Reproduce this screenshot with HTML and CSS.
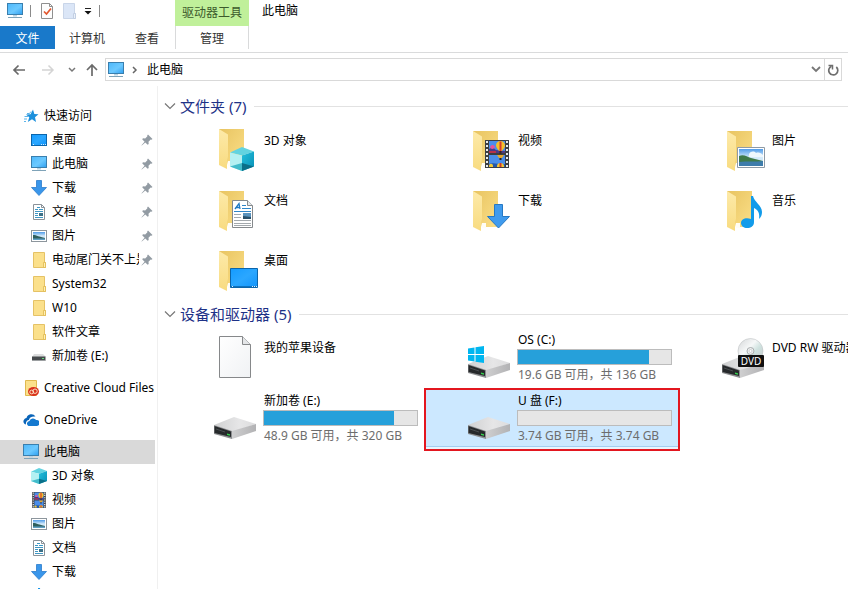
FILE: index.html
```html
<!DOCTYPE html>
<html lang="zh-CN">
<head>
<meta charset="utf-8">
<title>此电脑</title>
<link rel="stylesheet" href="styles.css">
</head>
<body>
<svg class="sprite" width="0" height="0" aria-hidden="true">
  <defs>
    <linearGradient id="g-screen" x1="0" y1="0" x2="1" y2="1"><stop offset="0" stop-color="#4db8fb"/><stop offset=".55" stop-color="#6cc9ff"/><stop offset="1" stop-color="#2f9ff0"/></linearGradient>
    <linearGradient id="g-desk" x1="0" y1="0" x2="1" y2="1"><stop offset="0" stop-color="#149bff"/><stop offset=".5" stop-color="#2ba7ff"/><stop offset="1" stop-color="#1194fb"/></linearGradient>
    <linearGradient id="g-back" x1="0" y1="0" x2="1" y2="1"><stop offset="0" stop-color="#e8c461"/><stop offset="1" stop-color="#fbdf88"/></linearGradient>
    <linearGradient id="g-flap" x1="0" y1="0" x2="0" y2="1"><stop offset="0" stop-color="#fdeaa9"/><stop offset="1" stop-color="#f8db80"/></linearGradient>
    <linearGradient id="g-top" x1="0" y1="0" x2="1" y2="0"><stop offset="0" stop-color="#cfd0d1"/><stop offset=".6" stop-color="#e6e6e7"/><stop offset="1" stop-color="#dcdcdd"/></linearGradient>
    <linearGradient id="g-side" x1="0" y1="0" x2="1" y2="0"><stop offset="0" stop-color="#cfcfd0"/><stop offset="1" stop-color="#b2b2b4"/></linearGradient>
    <linearGradient id="g-paper" x1="0" y1="0" x2="1" y2="1"><stop offset="0" stop-color="#ffffff"/><stop offset="1" stop-color="#f0f2f4"/></linearGradient>
    <linearGradient id="g-disc" x1="0" y1="0" x2="1" y2="1"><stop offset="0" stop-color="#d4d6d8"/><stop offset=".4" stop-color="#f6f8f8"/><stop offset=".6" stop-color="#cfe2df"/><stop offset="1" stop-color="#c5c7ca"/></linearGradient>
    <linearGradient id="g-sky" x1="0" y1="0" x2="0" y2="1"><stop offset="0" stop-color="#4f9be8"/><stop offset=".5" stop-color="#d5ebfb"/><stop offset="1" stop-color="#c8e2f0"/></linearGradient>
    <linearGradient id="g-cube" x1="0" y1="0" x2="1" y2="1"><stop offset="0" stop-color="#24c0dc"/><stop offset="1" stop-color="#078fb6"/></linearGradient>
  </defs>

  <symbol id="pc" viewBox="0 0 16 16">
    <rect x=".5" y=".5" width="15" height="11" fill="url(#g-screen)" stroke="#3a7fae"/>
    <path d="M6 12h4v1.500H6z" fill="#b9d3e2"/><path d="M1 14.500h14" stroke="#7fa3b8"/>
  </symbol>
  <symbol id="star" viewBox="0 0 16 16">
    <path d="M10 1.500 11.300 6l4.200.2-3.500 3 1 4.800-4-2.700L4.800 14l1.500-4.700L3 6.500l4.500-.3z" fill="#1c90dc"/>
    <path d="M8 3.500 6.500 5.500H4M5 8.500H1.500M4 11H1M3 13.500H1" stroke="#5db5ea" fill="none"/>
  </symbol>
  <symbol id="desk" viewBox="0 0 16 16">
    <rect x=".5" y="2.500" width="15" height="11" fill="url(#g-desk)" stroke="#0b65ab"/>
    <path d="M2 12.500h1M10 12.500h1M12 12.500h1M14 12.500h1" stroke="#cfeaff"/>
  </symbol>
  <symbol id="down" viewBox="0 0 16 16">
    <path d="M5.500.5h5v7h5L8 15.500.5 7.500h5z" fill="#3a96ea" stroke="#2b7ccc" stroke-width=".8"/>
  </symbol>
  <symbol id="doc" viewBox="0 0 16 16">
    <path d="M2.500.5h8l3 3v12h-11z" fill="#fff" stroke="#8a9299"/><path d="M10.500.5v3h3" fill="none" stroke="#8a9299"/>
    <path d="M4 5.500h3M6 3.500h3M8 5.500h4M4 7.500h8M4 9.500h3M4 11.500h3M4 13.500h8" fill="none" stroke="#3f97c4"/>
    <rect x="8" y="9" width="4" height="3" fill="#3c7087"/>
  </symbol>
  <symbol id="pic" viewBox="0 0 16 16">
    <rect x=".5" y="2.500" width="15" height="11" fill="#fff" stroke="#8d969d"/>
    <rect x="2" y="4" width="12" height="8" fill="url(#g-sky)"/>
    <path d="M2 7c4 0 6 2 12 3v2H2z" fill="#2f5f5e"/><path d="M2 10.500h12V12H2z" fill="#5f9fc4"/>
  </symbol>
  <symbol id="folder" viewBox="0 0 16 16">
    <path d="M2.500.5h11v10h1v5h-12z" fill="#fbe08b" stroke="#e5c266"/><path d="M12.500 15.500v-5h2v5z" fill="#fff0b5" stroke="#e0b94f" stroke-width=".8"/>
  </symbol>
  <symbol id="disk" viewBox="0 0 16 16">
    <path d="M3 6h9l3 3H1z" fill="#dcddde"/><path d="M1 8.500h13.500v4H1z" fill="#464a4d"/><path d="M1 12.500h13.500" stroke="#9c9fa1"/><rect x="11" y="10" width="2" height="1" fill="#63dd7b"/>
  </symbol>
  <symbol id="cc" viewBox="0 0 16 16">
    <path d="M2.500.5h11v15h-11z" fill="#fbe08b" stroke="#e0b94f"/>
    <ellipse cx="10.500" cy="11.500" rx="5.500" ry="4.500" fill="#d9301c"/>
    <circle cx="8.700" cy="12" r="1.900" fill="none" stroke="#fbe0c0"/><circle cx="12" cy="11.200" r="2.200" fill="none" stroke="#fbe0c0"/>
  </symbol>
  <symbol id="cloud" viewBox="0 0 16 16">
    <path d="M3 12.500A3 3 0 0 1 1 7.800 3 3 0 0 1 3.500 6 5 5 0 0 1 12.500 4.500C8.500 4 6 6 6 8c-2 .2-3.500 2-3 4.500z" fill="#0a64b8"/>
    <path d="M5.500 14a2.700 2.700 0 0 1 .9-5.100A4 4 0 0 1 13.200 8 3 3 0 0 1 14 14z" fill="#1479d0"/>
  </symbol>
  <symbol id="cube" viewBox="0 0 24 24">
    <path d="M0 5.500 12 0l12 4.500-12 4z" fill="#62d3e0"/><path d="M0 5.500 12 8.500V24L0 19.500z" fill="#b4f0f2"/>
    <path d="M12 8.500 24 4.500v15L12 24z" fill="url(#g-cube)"/><path d="m0 19.500 12-3.500v8z" fill="#42bccb"/><path d="m12 16 12 3.500L12 24z" fill="#0a6f88"/>
  </symbol>
  <symbol id="film" viewBox="0 0 24 28">
    <path d="M0 0h24v28H0z" fill="#3c3f42"/>
    <path d="M2 1v26M22 1v26" stroke="#e9ecee" stroke-width="2" stroke-dasharray="2 2"/>
    <path d="M4 1h16v12H4zM4 15h16v12H4z" fill="#4a8eea"/>
    <path d="M4 9c3-2 5-1 7 1l9 1v2H4z" fill="#4c3a86"/><path d="M4 11h7v2H4z" fill="#b8324a"/><path d="M4 24c5-2 10 1 16 0v3H4z" fill="#2458aa"/>
    <path d="M11 5.500a4.500 4.500 0 0 1 9 0c0 2-2 4-3 5.500h-3c-1-1.500-3-3.500-3-5.500z" fill="#f3c02b"/><path d="M14.500 1.500h2V11h-2z" fill="#d63a2e"/><path d="M14.500 11h2v3h-2z" fill="#3a2620"/>
    <path d="M5 7c2-3 4-2 5 0-1 2-4 3-5 0z" fill="#e7529b"/><path d="M12 15h7l-2 3h-3z" fill="#e8a82a"/><path d="M14.500 18h2v2h-2z" fill="#222"/>
    <path d="M4 26c0-3 4-3 4 0v1H4zM12 26c0-4 7-4 7 0v1h-7z" fill="#f2ca39"/><path d="M14.500 23h2v4h-2z" fill="#cf3b2c"/>
  </symbol>
  <symbol id="pin" viewBox="0 0 12 12">
    <path d="M7 .5 11.500 5l-1 .8-.8-.2-2.200 2.200.2 2.200-1 .8L4.300 8.400.8 11.500l-.3-.3 3.100-3.500L1.200 5.300l.8-1 2.200.2L6.400 2.300 6.200 1.500z" fill="#929ba3"/>
  </symbol>
  <symbol id="win" viewBox="0 0 16 17">
    <path d="M0 2.500 6.500 1.500V8H0zM7.500 1.300 16 0v8H7.500zM0 9h6.500v6.500L0 14.500zM7.500 9H16v8l-8.500-1.300z" fill="#00b6f0"/>
  </symbol>

  <symbol id="big-folder" viewBox="0 0 48 48">
    <path d="M9 5h25v36H18z" fill="url(#g-back)"/><path d="M18 37h4v5h-4z" fill="#fffdf5"/><path d="m9 5 9 5.500V33l-1 3v9l-8-4z" fill="url(#g-flap)"/>
  </symbol>
  <symbol id="drive" viewBox="0 0 48 48">
    <path d="M4 30 24 22l22 7-24 8z" fill="url(#g-top)"/><path d="m22 36 24-7v7l-24 8z" fill="url(#g-side)"/>
    <path d="m4 30 18 6v8L4 39z" fill="#8c8e90"/><path d="m4.500 31 16.500 5.500V42L4.500 38z" fill="#26292b"/>
    <path d="m6 34 9 3" stroke="#4a4e51"/><path d="m17 38.500 3 .8v1.500l-3-.8z" fill="#35d04e"/>
  </symbol>
  <symbol id="big-doc" viewBox="0 0 48 48">
    <path d="M22.500 14.500h15l5 5v22h-20z" fill="#fff" stroke="#85898c"/><path d="M37.500 14.500v5h5" fill="#e6e9eb" stroke="#85898c"/>
    <path d="m25 23 4-5.500 1 5.500M26.500 21.500h3" fill="none" stroke="#1d78c4" stroke-width="1.300"/>
    <path d="M32 19.500h4M32 22.500h9M24 25.500h17" stroke="#2f86c8"/><path d="M24 28.500h7M24 31.500h7M24 34.500h17M24 37.500h17M24 39.500h17" stroke="#a3a9ad"/>
    <path d="M33 27h8v6h-8z" fill="#5a93bd"/><path d="m33 30 8 1v2h-8z" fill="#28506a"/>
  </symbol>
</svg>

<header class="ribbon">
  <div class="quick">
    <svg class="i16"><use href="#pc"/></svg>
    <span class="bar"></span>
    <button class="plain check" aria-label="属性"><svg width="14" height="16" viewBox="0 0 14 16"><path d="M1.500.5h8l3 3v12h-11z" fill="#fdfdfd" stroke="#8f8f8f"/><path d="M9.500.5v3h3" fill="none" stroke="#8f8f8f"/><path d="m4 8.500 2.500 2.500 4.500-5.500" fill="none" stroke="#e2572e" stroke-width="1.700"/></svg></button>
    <button class="plain" aria-label="新建文件夹"><svg width="14" height="16" viewBox="0 0 14 16"><path d="M.5.500h11v10h1v5H.5z" fill="#dbe6f7" stroke="#c9d5e8"/><path d="M10.500 15.500v-5h2v5z" fill="#eaf1fb" stroke="#c3cfe2"/></svg></button>
    <button class="plain" aria-label="自定义快速访问工具栏"><svg width="8" height="8" viewBox="0 0 8 8"><path d="M1 1.500h6" stroke="#222"/><path d="M.5 4h7L4 7.500z" fill="#111"/></svg></button>
    <span class="bar"></span>
  </div>
  <div class="context">驱动器工具</div>
  <h1 class="caption">此电脑</h1>
  <button class="tab file">文件</button>
  <button class="tab">计算机</button>
  <button class="tab">查看</button>
  <button class="tab manage">管理</button>
</header>

<div class="navbar">
  <div class="arrows">
    <button class="plain" aria-label="后退"><svg width="14" height="14" viewBox="0 0 14 14"><path d="M13 7H2M6.500 2.500 2 7l4.500 4.500" fill="none" stroke="#6a6a6a" stroke-width="1.700"/></svg></button>
    <button class="plain" aria-label="前进"><svg width="14" height="14" viewBox="0 0 14 14"><path d="M1 7h11M7.500 2.500 12 7l-4.500 4.500" fill="none" stroke="#d4d4d4" stroke-width="1.500"/></svg></button>
    <button class="plain narrow" aria-label="最近位置"><svg width="8" height="6" viewBox="0 0 8 6"><path d="m1 1 3 3 3-3" fill="none" stroke="#777" stroke-width="1.500"/></svg></button>
    <button class="plain narrow" aria-label="上移"><svg width="14" height="14" viewBox="0 0 14 14"><path d="M7 13V2M2 7l5-5 5 5" fill="none" stroke="#6a6a6a" stroke-width="1.700"/></svg></button>
  </div>
  <div class="address">
    <svg class="i16"><use href="#pc"/></svg>
    <svg width="6" height="8" viewBox="0 0 6 8"><path d="m1 1 3 3-3 3" fill="none" stroke="#666" stroke-width="1.500"/></svg>
    <input type="text" value="此电脑" aria-label="地址">
    <button class="plain drop" aria-label="以前的位置"><svg width="10" height="7" viewBox="0 0 10 7"><path d="m1 1 4 4 4-4" fill="none" stroke="#777" stroke-width="1.800"/></svg></button>
    <button class="plain refresh" aria-label="刷新"><svg width="12" height="12" viewBox="0 0 12 12"><path d="M4.500 2.200a4.500 4.500 0 1 0 4.800.8" fill="none" stroke="#6f6f6f" stroke-width="1.700"/><path d="M1.500 1.500h4v4" fill="none" stroke="#6f6f6f" stroke-width="1.500"/></svg></button>
  </div>
</div>

<div class="body">
  <nav class="side" aria-label="导航窗格">
    <section>
      <a href="#"><svg class="i16"><use href="#star"/></svg><span>快速访问</span></a>
      <a href="#" class="sub"><svg class="i16"><use href="#desk"/></svg><span>桌面</span><svg class="pin"><use href="#pin"/></svg></a>
      <a href="#" class="sub"><svg class="i16"><use href="#pc"/></svg><span>此电脑</span><svg class="pin"><use href="#pin"/></svg></a>
      <a href="#" class="sub"><svg class="i16"><use href="#down"/></svg><span>下载</span><svg class="pin"><use href="#pin"/></svg></a>
      <a href="#" class="sub"><svg class="i16"><use href="#doc"/></svg><span>文档</span><svg class="pin"><use href="#pin"/></svg></a>
      <a href="#" class="sub"><svg class="i16"><use href="#pic"/></svg><span>图片</span><svg class="pin"><use href="#pin"/></svg></a>
      <a href="#" class="sub"><svg class="i16"><use href="#folder"/></svg><span>电动尾门关不上是</span><svg class="pin"><use href="#pin"/></svg></a>
      <a href="#" class="sub"><svg class="i16"><use href="#folder"/></svg><span>System32</span></a>
      <a href="#" class="sub"><svg class="i16"><use href="#folder"/></svg><span>W10</span></a>
      <a href="#" class="sub"><svg class="i16"><use href="#folder"/></svg><span>软件文章</span></a>
      <a href="#" class="sub"><svg class="i16"><use href="#disk"/></svg><span>新加卷 (E:)</span></a>
    </section>
    <section><a href="#"><svg class="i16"><use href="#cc"/></svg><span>Creative Cloud Files</span></a></section>
    <section><a href="#"><svg class="i16"><use href="#cloud"/></svg><span>OneDrive</span></a></section>
    <section>
      <a href="#" class="current" aria-current="page"><svg class="i16"><use href="#pc"/></svg><span>此电脑</span></a>
      <a href="#" class="sub"><svg class="i16"><use href="#cube"/></svg><span>3D 对象</span></a>
      <a href="#" class="sub"><svg class="i16"><use href="#film"/></svg><span>视频</span></a>
      <a href="#" class="sub"><svg class="i16"><use href="#pic"/></svg><span>图片</span></a>
      <a href="#" class="sub"><svg class="i16"><use href="#doc"/></svg><span>文档</span></a>
      <a href="#" class="sub"><svg class="i16"><use href="#down"/></svg><span>下载</span></a>
      <a href="#" class="sub" aria-label="音乐"><svg class="i16" viewBox="0 0 16 16"><path d="M7 0h2c0 3 4 4 4 8l-1 2c0-3-1-4-3-5v8a3 2.500 0 1 1-2-2z" fill="#1595e8"/></svg></a>
    </section>
  </nav>

  <main class="content">
    <h2 class="group"><svg width="12" height="8" viewBox="0 0 12 8"><path d="m1 1.500 5 5 5-5" fill="none" stroke="#777" stroke-width="1.200"/></svg>文件夹 (7)</h2>
    <div class="tiles folders">
      <div class="tile"><svg class="i48" viewBox="0 0 48 48"><use href="#big-folder" y="-2" width="48" height="48"/><use href="#cube" x="20" y="21" width="24" height="24"/></svg><p>3D 对象</p></div>
      <div class="tile"><svg class="i48" viewBox="0 0 48 48"><use href="#big-folder" width="48" height="48"/><use href="#film" x="21" y="14" width="24" height="28"/></svg><p>视频</p></div>
      <div class="tile"><svg class="i48" viewBox="0 0 48 48"><use href="#big-folder" width="48" height="48"/><path d="M19.500 21.500h27v20h-27z" fill="#fff" stroke="#8f9aa5"/><path d="M21 23h24v17H21z" fill="url(#g-sky)"/><path d="M31 28c2-3 5-3 7-1 3-1 5 0 7 2v2H31z" fill="#eef7fd"/><path d="M21 30c5-2 8 1 12 2l12 3v1H21z" fill="#3f7a4a"/><path d="M21 36c8-1 16 0 24-1v5H21z" fill="#3e7cab"/></svg><p>图片</p></div>
      <div class="tile"><svg class="i48" viewBox="0 0 48 48"><use href="#big-folder" width="48" height="48"/><use href="#big-doc" width="48" height="48"/></svg><p>文档</p></div>
      <div class="tile"><svg class="i48" viewBox="0 0 48 48"><use href="#big-folder" width="48" height="48"/><path d="M30.500 18.500h8v12h7L34.500 42 23.500 30.500h7z" fill="#3f9bee" stroke="#2679c4"/></svg><p>下载</p></div>
      <div class="tile"><svg class="i48" viewBox="0 0 48 48"><use href="#big-folder" width="48" height="48"/><path d="M33 10h2c1 6 9 9 9 16 0 3-1 5-3 7 1-6-1-9-5-11v14c0 4-3 6-7 6-3 0-6-2-6-5 0-4 5-6 10-4z" fill="#129bea"/></svg><p>音乐</p></div>
      <div class="tile"><svg class="i48" viewBox="0 0 48 48"><use href="#big-folder" width="48" height="48"/><path d="M20.500 22.500h27v19h-27z" fill="url(#g-desk)" stroke="#0b65ab"/><path d="M21 40.500h26" stroke="#0d72bf"/><path d="M22 40.500h1M42 40.500h1M44 40.500h1M46 40.500h1" stroke="#d9efff"/></svg><p>桌面</p></div>
    </div>

    <h2 class="group"><svg width="12" height="8" viewBox="0 0 12 8"><path d="m1 1.500 5 5 5-5" fill="none" stroke="#777" stroke-width="1.200"/></svg>设备和驱动器 (5)</h2>
    <div class="tiles drives">
      <div class="tile"><svg class="i48" viewBox="0 0 48 48"><path d="M9.500 2.500h23l8 8v33h-31z" fill="url(#g-paper)" stroke="#86888a"/><path d="M32.500 2.500v8h8" fill="#e4e6e8" stroke="#86888a"/></svg><p>我的苹果设备</p></div>
      <div class="tile volume"><svg class="i48" viewBox="0 0 48 48"><use href="#drive" width="48" height="48"/><use href="#win" x="4" y="12" width="16" height="17"/></svg>
        <div class="info"><label for="c">OS (C:)</label><progress id="c" max="136" value="116.400"></progress><small>19.6 GB 可用，共 136 GB</small></div></div>
      <div class="tile"><svg class="i48" viewBox="0 0 48 48"><use href="#drive" width="48" height="48"/><circle cx="32.500" cy="17" r="12.500" fill="url(#g-disc)" stroke="#c0c3c5" stroke-width=".6"/><circle cx="32.500" cy="17" r="3.500" fill="#eef0f0" stroke="#a9adaf"/><circle cx="32.500" cy="17" r="1.500" fill="#fff" stroke="#b5b8ba" stroke-width=".6"/><rect x="20" y="21" width="26" height="12" rx="1" fill="#111"/><text x="33" y="31" class="dvd">DVD</text></svg><p>DVD RW 驱动器</p></div>
      <div class="tile volume"><svg class="i48" viewBox="0 0 48 48"><use href="#drive" width="48" height="48"/></svg>
        <div class="info"><label for="e">新加卷 (E:)</label><progress id="e" max="320" value="271.100"></progress><small>48.9 GB 可用，共 320 GB</small></div></div>
      <div class="tile volume selected"><svg class="i48" viewBox="0 0 48 48"><use href="#drive" width="48" height="48"/></svg>
        <div class="info"><label for="f">U 盘 (F:)</label><progress id="f" max="3.740" value="0"></progress><small>3.74 GB 可用，共 3.74 GB</small></div></div>
    </div>
  </main>
</div>
</body>
</html>
```
FILE: styles.css
```css
* {
  box-sizing: border-box;
}

body {
  margin: 0;
  height: 100vh;
  display: flex;
  flex-direction: column;
  overflow: hidden;
  background: #fff;
  color: #000;
  font: 12px/16px "Noto Sans", "Noto Sans CJK SC", sans-serif;
}

svg {
  display: block;
  flex: none;
}

.sprite {
  position: absolute;
}

.i16 {
  width: 16px;
  height: 16px;
}

.i48 {
  width: 48px;
  height: 48px;
}

.plain {
  display: flex;
  align-items: center;
  justify-content: center;
  padding: 0;
  border: 0;
  background: none;
}

/* Ribbon */
.ribbon {
  flex: none;
  display: grid;
  grid-template: 26px 23px / 55px 64px 56px 74px 1fr;
  padding-bottom: 3px;
  border-bottom: 1px solid #dadbdc;
}

.quick {
  grid-column: 1 / 4;
  display: flex;
  align-items: center;
  gap: 7px;
  padding: 0 0 4px 7px;
}

.bar {
  width: 1px;
  height: 12px;
  background: #8a8a8a;
}

.check {
  margin: 0 2px;
}

.context {
  display: flex;
  align-items: center;
  justify-content: center;
  background: #c0f09a;
  color: #3c5a2c;
}

.caption {
  margin: 0;
  padding: 3px 13px;
  font-size: 12px;
  font-weight: 400;
}

.tab {
  padding: 2px 0 0;
  border: 0;
  background: #fff;
  color: #333;
  font: inherit;
}

.file {
  background: #1979ca;
  color: #fff;
}

.manage {
  border: solid #d9dadb;
  border-width: 0 1px;
}

/* Navigation bar */
.navbar {
  flex: none;
  display: flex;
  padding: 5px 6px 5px 4px;
}

.arrows {
  display: flex;
  align-items: center;
  width: 101px;
}

.arrows .plain {
  width: 29px;
  height: 22px;
}

.arrows .narrow {
  width: 20px;
}

.address {
  flex: 1;
  display: flex;
  align-items: center;
  height: 23px;
  padding-left: 2px;
  border: 1px solid #d9d9d9;
}

.address > svg + svg {
  margin-left: 8px;
}

.address input {
  flex: 1;
  min-width: 0;
  padding: 0 9px;
  border: 0;
  outline: 0;
  background: none;
  color: inherit;
  font: inherit;
}

.drop {
  width: 16px;
  height: 21px;
}

.refresh {
  width: 17px;
  height: 21px;
  border-left: 1px solid #d9d9d9;
}

/* Navigation pane */
.body {
  flex: 1;
  min-height: 0;
  display: flex;
}

.side {
  flex: none;
  width: 158px;
  padding: 18px 2px 0 0;
  border-right: 1px solid #f0f0f0;
  overflow: hidden;
}

.side section + section {
  margin-top: 8px;
}

.side a {
  display: flex;
  align-items: center;
  gap: 5px;
  height: 24px;
  padding-left: 23px;
  color: inherit;
  text-decoration: none;
}

.side .sub {
  padding-left: 31px;
}

.side a span {
  flex: 1;
  min-width: 0;
  overflow: hidden;
  white-space: nowrap;
}

.side .current {
  background: #d9d9d9;
}

.pin {
  width: 12px;
  height: 12px;
  margin: 0 2px 0 -3px;
}

/* Item view */
.content {
  flex: 1;
  min-width: 0;
  padding-top: 6px;
  overflow: hidden;
}

.group {
  display: flex;
  align-items: center;
  gap: 4px;
  height: 28px;
  margin: 0;
  padding-left: 6px;
  color: #1e3287;
  font-size: 15px;
  font-weight: 400;
}

.group::after {
  content: "";
  flex: 1;
  height: 1px;
  margin-left: 4px;
  background: #e2e2e2;
}

.tiles {
  display: grid;
  grid-template-columns: repeat(3, 254px);
  padding-left: 13px;
}

.folders {
  grid-auto-rows: 60px;
}

.drives {
  grid-auto-rows: 61px;
}

.tile {
  display: flex;
  gap: 6px;
  padding: 6px 0 0 39px;
}

.tile p {
  margin: 0;
  padding-top: 6px;
  white-space: nowrap;
}

.folders p {
  padding-top: 7px;
}

.volume {
  gap: 5px;
}

.info {
  display: flex;
  flex-direction: column;
  width: 155px;
  margin-top: -2px;
}

.info label {
  padding-left: 1px;
}

progress {
  appearance: none;
  width: 100%;
  height: 16px;
  margin: 1px 0 2px;
  border: 1px solid #bcbcbc;
  background: #e6e6e6;
}

progress::-webkit-progress-bar {
  background: #e6e6e6;
}

progress::-webkit-progress-value {
  background: #26a0da;
}

small {
  padding-left: 1px;
  color: #6d6d6d;
  font-size: 12px;
  white-space: nowrap;
}

.selected {
  background: #cce8ff;
  box-shadow: inset 0 -3px #e9f4fd, inset 0 -4px #a3cdf0;
  outline: 2px solid #e3161f;
  outline-offset: -1px;
}

.dvd {
  fill: #fff;
  font-size: 10px;
  text-anchor: middle;
}
```
